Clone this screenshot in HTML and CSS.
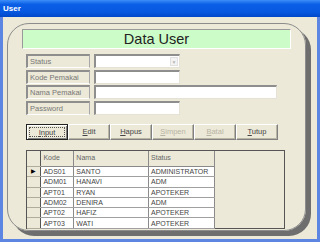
FILE: index.html
```html
<!DOCTYPE html>
<html lang="id">
<head>
  <meta charset="UTF-8">
  <title>User</title>
  <link rel="stylesheet" href="styles.css">
</head>
<body>
  <div class="window">
    <div class="titlebar">User</div>
    <div class="client">
      <div class="panel">
        <div class="banner">Data User</div>

        <div class="form">
          <div class="row">
            <span class="label">Status</span>
            <span class="field combo"><span class="arrow">&#9660;</span></span>
          </div>
          <div class="row">
            <span class="label">Kode Pemakai</span>
            <span class="field"></span>
          </div>
          <div class="row">
            <span class="label">Nama Pemakai</span>
            <span class="field wide"></span>
          </div>
          <div class="row">
            <span class="label">Password</span>
            <span class="field"></span>
          </div>
        </div>

        <div class="buttons">
          <button class="btn focus"><span><u>I</u>nput</span></button>
          <button class="btn"><span><u>E</u>dit</span></button>
          <button class="btn"><span><u>H</u>apus</span></button>
          <button class="btn" disabled><span><u>S</u>impen</span></button>
          <button class="btn" disabled><span><u>B</u>atal</span></button>
          <button class="btn"><span><u>T</u>utup</span></button>
        </div>

        <div class="grid">
          <table>
            <tr class="head">
              <th class="ind"></th>
              <th class="c-kode">Kode</th>
              <th class="c-nama">Nama</th>
              <th class="c-status">Status</th>
            </tr>
            <tr><td class="ind current">&#9654;</td><td>ADS01</td><td>SANTO</td><td>ADMINISTRATOR</td></tr>
            <tr><td class="ind"></td><td>ADM01</td><td>HANAVI</td><td>ADM</td></tr>
            <tr><td class="ind"></td><td>APT01</td><td>RYAN</td><td>APOTEKER</td></tr>
            <tr><td class="ind"></td><td>ADM02</td><td>DENIRA</td><td>ADM</td></tr>
            <tr><td class="ind"></td><td>APT02</td><td>HAFIZ</td><td>APOTEKER</td></tr>
            <tr><td class="ind"></td><td>APT03</td><td>WATI</td><td>APOTEKER</td></tr>
          </table>
        </div>
      </div>
    </div>
  </div>
</body>
</html>
```

FILE: styles.css
```css
* {
  box-sizing: border-box;
}
body {
  margin: 0;
  padding: 0;
  font-family: "Liberation Sans", Arial, sans-serif;
  background: #ece9d8;
}
.window {
  width: 320px;
  height: 242px;
  border: 3px solid #5d85e2;
  border-top: none;
  display: flex;
  flex-direction: column;
}
.titlebar {
  height: 17px;
  margin: 0 -3px;
  padding: 0 0 0 3px;
  color: #fff;
  font-weight: bold;
  font-size: 8px;
  line-height: 18px;
  background: linear-gradient(#3d8ef8, #0a5fe6 25%, #0758e0 70%, #0047c8);
}
.client {
  flex: 1;
  background: #ece9d8;
  padding: 6px 0 0 4px;
}
.panel {
  width: 299px;
  height: 208px;
  border: 1px solid #8c8c8c;
  border-radius: 22px;
  box-shadow: 5px 5px 0 #6e6e6e;
  padding: 5px 0 0 14px;
}
.banner {
  width: 269px;
  height: 20px;
  background: #ccfcc8;
  border-top: 1px solid #9a9a9a;
  border-left: 1px solid #9a9a9a;
  border-bottom: 1px solid #fff;
  border-right: 1px solid #fff;
  text-align: center;
  font-size: 14.5px;
  line-height: 18px;
  color: #222;
}
.form {
  margin: 5px 0 0 4px;
  display: flex;
  flex-direction: column;
  gap: 1.5px;
}
.row {
  display: flex;
  gap: 4px;
  height: 14px;
}
.label {
  width: 64px;
  font-size: 7.5px;
  color: #777;
  padding: 1px 0 0 2px;
  border-top: 2px solid #8e8e8e;
  border-left: 2px solid #8e8e8e;
  border-right: 1px solid #a8a8a8;
  border-bottom: 1px solid #fdfdfd;
}
.field {
  position: relative;
  width: 86px;
  background: #fff;
  border-top: 2px solid #8e8e8e;
  border-left: 2px solid #8e8e8e;
  border-right: 1px solid #e4e2d6;
  border-bottom: 1px solid #e4e2d6;
}
.field.wide {
  width: 183px;
}
.combo .arrow {
  position: absolute;
  right: 1px;
  top: 1px;
  width: 8px;
  height: 9px;
  font-size: 5px;
  line-height: 9px;
  text-align: center;
  color: #b8b8b8;
  background: #f3f3f3;
  border: 1px solid #e0e0e0;
}
.buttons {
  display: flex;
  margin: 9px 0 0 4px;
}
.btn {
  width: 42px;
  height: 16px;
  padding: 0;
  font-family: "Liberation Sans", Arial, sans-serif;
  font-size: 7.5px;
  font-weight: normal;
  color: #444;
  background: #ece9d8;
  border-top: 1px solid #fff;
  border-left: 1px solid #fff;
  border-right: 1px solid #808080;
  border-bottom: 1px solid #808080;
  box-shadow: inset -1px -1px 0 #b9b5a5;
}
.btn.focus {
  border: 1px solid #222;
  box-shadow: inset 1px 1px 0 #fff, inset -1px -1px 0 #808080;
}
.btn.focus span {
  display: block;
  margin: 2px;
  height: 10px;
  line-height: 9px;
  border: 1px dotted #555;
}
.btn:disabled {
  color: #b8b4a4;
}
.grid {
  margin: 10px 0 0 4px;
  width: 259px;
  height: 79px;
  background: #ece9d8;
  border: 1px solid #555;
}
table {
  border-collapse: collapse;
  width: 188px;
  font-size: 7px;
  color: #444;
}
th {
  height: 16px;
  font-weight: normal;
  text-align: left;
  padding: 0 0 2px 2px;
  color: #666;
  background: #ece9d8;
  border-right: 1px solid #8a8a8a;
  border-bottom: 1px solid #8a8a8a;
}
td {
  height: 10.3px;
  padding: 0 0 0 2px;
  background: #fff;
  border-right: 1px solid #8a8a8a;
  border-bottom: 1px solid #a0a0a0;
  white-space: nowrap;
  line-height: 9px;
}
.ind {
  width: 14px;
  background: #ece9d8;
  border-right: 1px solid #555;
  border-bottom: 1px solid #b0ac9c;
}
td.ind {
  background: #ece9d8;
}
.ind.current {
  font-size: 6px;
  color: #000;
  text-align: center;
  padding: 0;
}
.c-kode {
  width: 33px;
}
.c-nama {
  width: 75px;
}
.c-status {
  width: 66px;
}
```
